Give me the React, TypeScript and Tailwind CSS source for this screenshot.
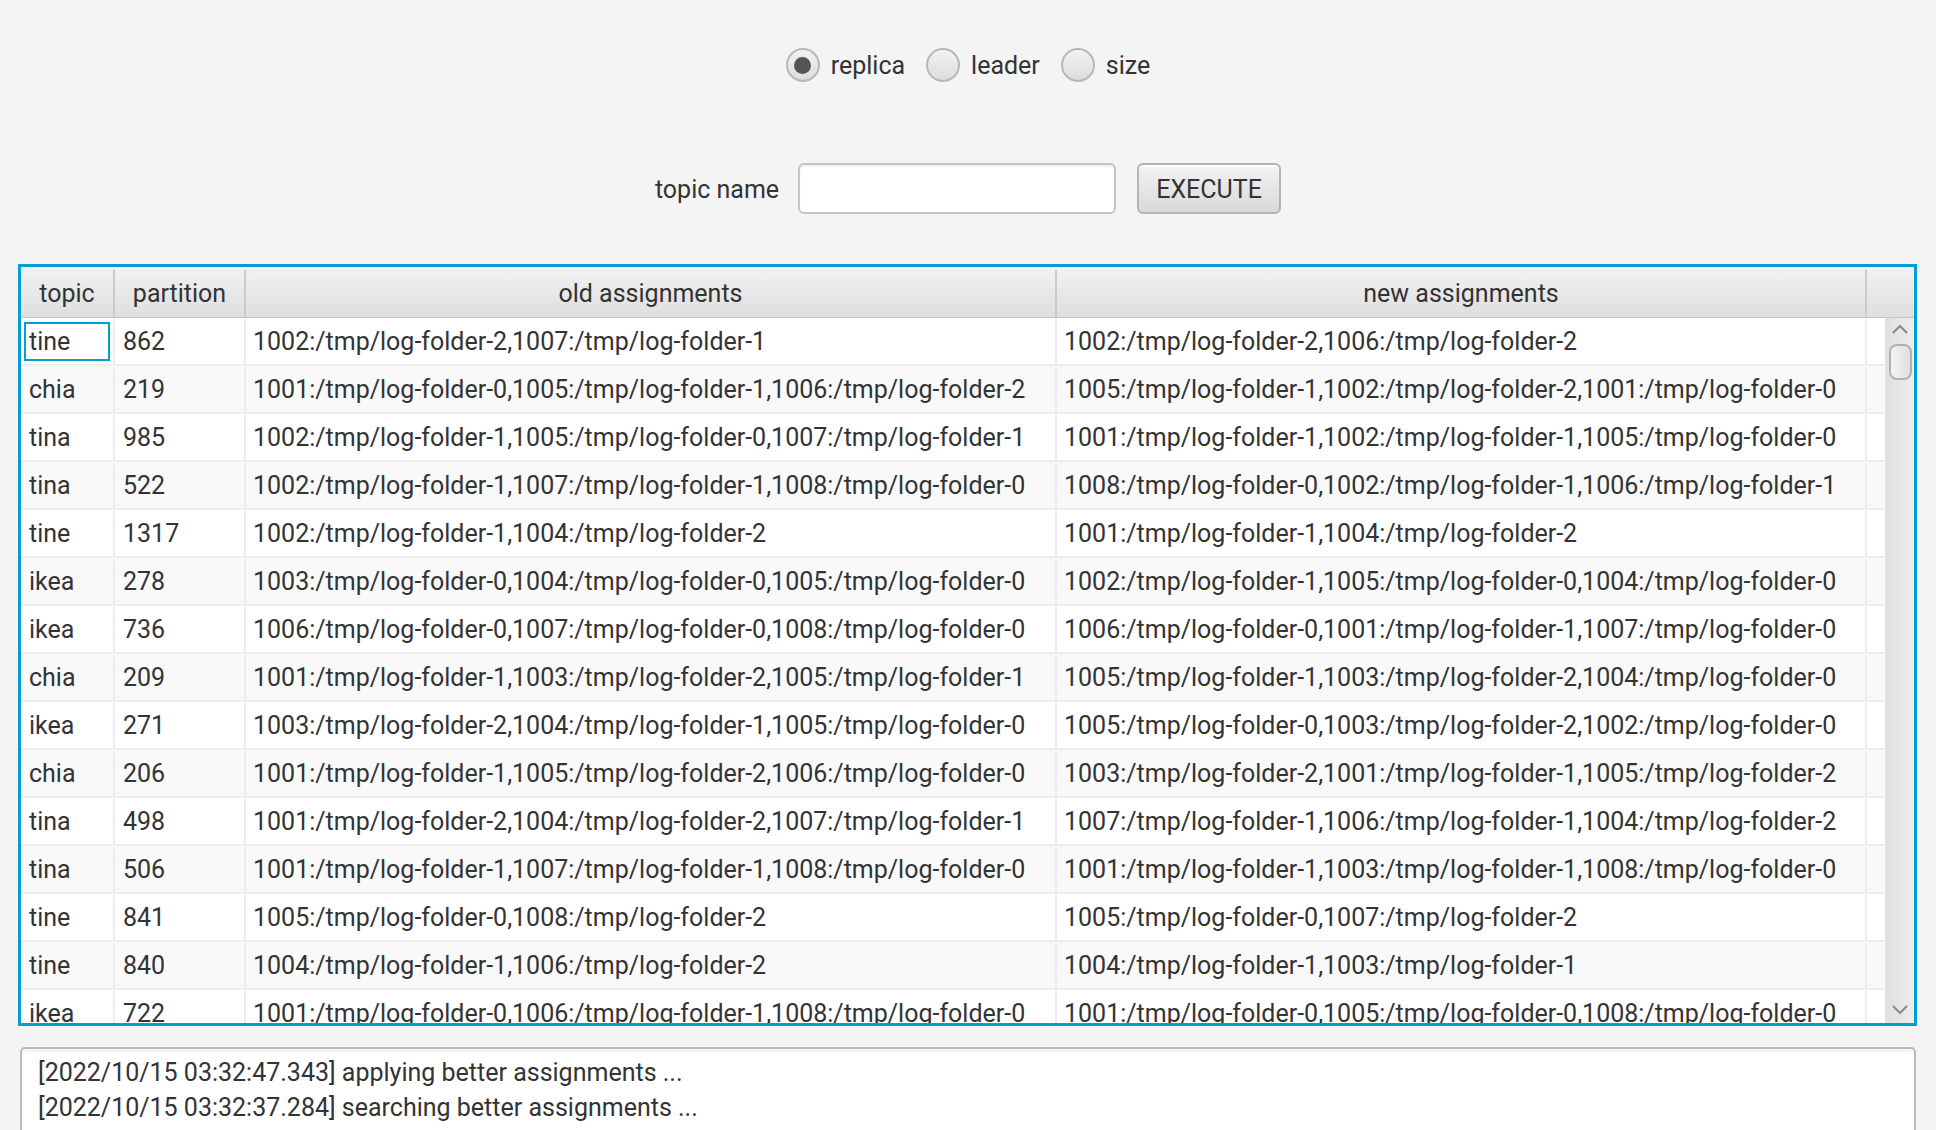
import { useState } from "react";

type Row = { topic: string; partition: string; oldA: string; newA: string };

const rows: Row[] = [
  { topic: "tine", partition: "862", oldA: "1002:/tmp/log-folder-2,1007:/tmp/log-folder-1", newA: "1002:/tmp/log-folder-2,1006:/tmp/log-folder-2" },
  { topic: "chia", partition: "219", oldA: "1001:/tmp/log-folder-0,1005:/tmp/log-folder-1,1006:/tmp/log-folder-2", newA: "1005:/tmp/log-folder-1,1002:/tmp/log-folder-2,1001:/tmp/log-folder-0" },
  { topic: "tina", partition: "985", oldA: "1002:/tmp/log-folder-1,1005:/tmp/log-folder-0,1007:/tmp/log-folder-1", newA: "1001:/tmp/log-folder-1,1002:/tmp/log-folder-1,1005:/tmp/log-folder-0" },
  { topic: "tina", partition: "522", oldA: "1002:/tmp/log-folder-1,1007:/tmp/log-folder-1,1008:/tmp/log-folder-0", newA: "1008:/tmp/log-folder-0,1002:/tmp/log-folder-1,1006:/tmp/log-folder-1" },
  { topic: "tine", partition: "1317", oldA: "1002:/tmp/log-folder-1,1004:/tmp/log-folder-2", newA: "1001:/tmp/log-folder-1,1004:/tmp/log-folder-2" },
  { topic: "ikea", partition: "278", oldA: "1003:/tmp/log-folder-0,1004:/tmp/log-folder-0,1005:/tmp/log-folder-0", newA: "1002:/tmp/log-folder-1,1005:/tmp/log-folder-0,1004:/tmp/log-folder-0" },
  { topic: "ikea", partition: "736", oldA: "1006:/tmp/log-folder-0,1007:/tmp/log-folder-0,1008:/tmp/log-folder-0", newA: "1006:/tmp/log-folder-0,1001:/tmp/log-folder-1,1007:/tmp/log-folder-0" },
  { topic: "chia", partition: "209", oldA: "1001:/tmp/log-folder-1,1003:/tmp/log-folder-2,1005:/tmp/log-folder-1", newA: "1005:/tmp/log-folder-1,1003:/tmp/log-folder-2,1004:/tmp/log-folder-0" },
  { topic: "ikea", partition: "271", oldA: "1003:/tmp/log-folder-2,1004:/tmp/log-folder-1,1005:/tmp/log-folder-0", newA: "1005:/tmp/log-folder-0,1003:/tmp/log-folder-2,1002:/tmp/log-folder-0" },
  { topic: "chia", partition: "206", oldA: "1001:/tmp/log-folder-1,1005:/tmp/log-folder-2,1006:/tmp/log-folder-0", newA: "1003:/tmp/log-folder-2,1001:/tmp/log-folder-1,1005:/tmp/log-folder-2" },
  { topic: "tina", partition: "498", oldA: "1001:/tmp/log-folder-2,1004:/tmp/log-folder-2,1007:/tmp/log-folder-1", newA: "1007:/tmp/log-folder-1,1006:/tmp/log-folder-1,1004:/tmp/log-folder-2" },
  { topic: "tina", partition: "506", oldA: "1001:/tmp/log-folder-1,1007:/tmp/log-folder-1,1008:/tmp/log-folder-0", newA: "1001:/tmp/log-folder-1,1003:/tmp/log-folder-1,1008:/tmp/log-folder-0" },
  { topic: "tine", partition: "841", oldA: "1005:/tmp/log-folder-0,1008:/tmp/log-folder-2", newA: "1005:/tmp/log-folder-0,1007:/tmp/log-folder-2" },
  { topic: "tine", partition: "840", oldA: "1004:/tmp/log-folder-1,1006:/tmp/log-folder-2", newA: "1004:/tmp/log-folder-1,1003:/tmp/log-folder-1" },
  { topic: "ikea", partition: "722", oldA: "1001:/tmp/log-folder-0,1006:/tmp/log-folder-1,1008:/tmp/log-folder-0", newA: "1001:/tmp/log-folder-0,1005:/tmp/log-folder-0,1008:/tmp/log-folder-0" },
];

const logs = [
  "[2022/10/15 03:32:47.343] applying better assignments ...",
  "[2022/10/15 03:32:37.284] searching better assignments ...",
];

const Radio = ({ label, checked, onClick }: { label: string; checked: boolean; onClick: () => void }) => (
  <button onClick={onClick} className="flex items-center gap-[11px]">
    <span className="w-[34px] h-[34px] rounded-full border-2 border-[#b8b8b8] bg-gradient-to-b from-[#f3f3f3] to-[#dcdcdc] flex items-center justify-center">
      {checked && <span className="w-[17px] h-[17px] rounded-full bg-[#555555]" />}
    </span>
    <span className="pt-[2px]">{label}</span>
  </button>
);

const App = () => {
  const [mode, setMode] = useState("replica");
  const [topicName, setTopicName] = useState("");

  return (
    <div
      className="w-[1936px] h-[1130px] overflow-hidden bg-[#f4f4f4] text-[#333333] text-[25px] pt-[48px]"
      style={{ fontFamily: "Roboto, 'Liberation Sans', sans-serif" }}
    >
      {/* mode radios */}
      <div className="flex justify-center items-center h-[34px] gap-[21px]">
        {["replica", "leader", "size"].map((m) => (
          <Radio key={m} label={m} checked={mode === m} onClick={() => setMode(m)} />
        ))}
      </div>

      {/* topic name row */}
      <div className="flex justify-center items-center h-[51px] mt-[81px]">
        <span className="mr-[19px] pt-[2px]">topic name</span>
        <input
          value={topicName}
          onChange={(e) => setTopicName(e.target.value)}
          className="w-[318px] h-[51px] bg-white border-2 border-[#c4c4c4] rounded-[6px] shadow-[inset_0_2px_2px_rgba(0,0,0,0.06)] outline-none px-3"
        />
        <button className="ml-[21px] w-[144px] h-[51px] pt-[2px] rounded-[6px] border-2 border-[#b4b4b4] bg-gradient-to-b from-[#f2f2f2] to-[#dadada] shadow-[inset_0_2px_0_#fbfbfb]">
          EXECUTE
        </button>
      </div>

      {/* assignments table */}
      <div className="mt-[50px] ml-[18px] w-[1899px] h-[762px] border-[3px] border-[#039ed3] bg-white flex flex-col">
        <div className="flex h-[51px] pt-[3px] border-b border-[#c4c4c4] bg-gradient-to-b from-[#f2f2f2] to-[#dfdfdf]">
          <div className="w-[94px] flex items-center justify-center border-r-2 border-[#cbcbcb]">topic</div>
          <div className="w-[131px] flex items-center justify-center border-r-2 border-[#cbcbcb]">partition</div>
          <div className="w-[811px] flex items-center justify-center border-r-2 border-[#cbcbcb]">old assignments</div>
          <div className="w-[810px] flex items-center justify-center border-r-2 border-[#cbcbcb]">new assignments</div>
          <div className="flex-1" />
        </div>
        <div className="flex flex-1 min-h-0">
          <div className="flex-1 overflow-hidden">
            {rows.map((r, i) => (
              <div
                key={i}
                className={`flex h-[48px] pt-[1px] border-b-2 border-[#ededed] ${i % 2 === 1 ? "bg-[#f9f9f9]" : "bg-white"}`}
              >
                <div className="w-[94px] shrink-0 flex items-center border-r-2 border-[#ececec] p-[3px]">
                  <div className={`flex items-center h-full w-full pl-[3px] ${i === 0 ? "border-2 border-[#039ed3]" : "border-2 border-transparent"}`}>
                    {r.topic}
                  </div>
                </div>
                <div className="w-[131px] shrink-0 flex items-center pl-[8px] border-r-2 border-[#ececec]">{r.partition}</div>
                <div className="w-[811px] shrink-0 flex items-center pl-[7px] border-r-2 border-[#ececec] whitespace-nowrap overflow-hidden">{r.oldA}</div>
                <div className="w-[810px] shrink-0 flex items-center pl-[7px] border-r-2 border-[#ececec] whitespace-nowrap overflow-hidden">{r.newA}</div>
                <div className="flex-1" />
              </div>
            ))}
          </div>
          {/* vertical scrollbar */}
          <div className="w-[29px] flex flex-col items-center bg-gradient-to-r from-[#e0e0e0] to-[#ededed] border-l border-[#e4e4e4]">
            <svg width="20" height="22" viewBox="0 0 20 22">
              <path d="M3 15 L10 8 L17 15" fill="none" stroke="#8a8a8a" strokeWidth="2" />
            </svg>
            <div className="mt-[4px] w-[23px] h-[36px] rounded-[8px] border-2 border-[#b0b0b0] bg-gradient-to-r from-[#f4f4f4] to-[#dedede]" />
            <div className="flex-1" />
            <svg width="20" height="24" viewBox="0 0 20 24" className="mb-[1px]">
              <path d="M3 8 L10 15 L17 8" fill="none" stroke="#8a8a8a" strokeWidth="2" />
            </svg>
          </div>
        </div>
      </div>

      {/* log area */}
      <div className="mt-[21px] ml-[20px] w-[1896px] h-[120px] bg-white border-2 border-[#bdbdbd] rounded-[5px] shadow-[inset_0_3px_3px_rgba(0,0,0,0.05)] pl-[16px] pt-[6px] leading-[35px]">
        {logs.map((l) => (
          <div key={l}>{l}</div>
        ))}
      </div>
    </div>
  );
};

export default App;
